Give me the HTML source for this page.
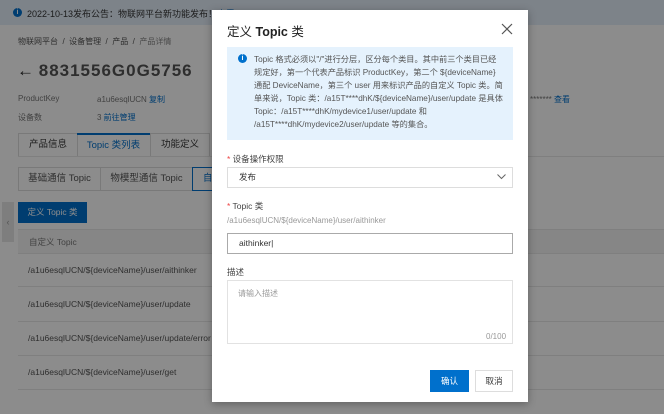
<!DOCTYPE html><html><head><meta charset="utf-8"><style>
*{margin:0;padding:0;box-sizing:border-box}
body{width:664px;height:414px;overflow:hidden;position:relative;background:#fff;font-family:"Liberation Sans","Noto Sans CJK SC",sans-serif;color:#333;font-size:9px}
.a{position:absolute;white-space:nowrap}
.ov{position:absolute;inset:0;background:rgba(0,0,0,0.45)}
.m{position:absolute;left:212px;top:10px;width:316px;height:392px;background:#fff;box-shadow:0 2px 8px rgba(0,0,0,.3)}
.blue{color:#0070cc}
.hl{position:absolute;left:18px;right:0;height:1px;background:#e8e8e8}
</style></head><body>
<div class="a" style="left:0;top:0;width:664px;height:25px;background:#e3eefa"></div>
<div class="a" style="left:13px;top:8px;width:9px;height:9px;border-radius:50%;background:#0070cc;color:#fff;font-size:7px;text-align:center;line-height:9px;font-weight:bold">i</div>
<div class="a" style="left:27px;top:7px;font-size:9px">2022-10-13发布公告：物联网平台新功能发布！<span class="blue">查看</span></div>
<div class="a" style="left:18px;top:36px;font-size:8px;color:#555">物联网平台 &nbsp;/ &nbsp;设备管理 &nbsp;/ &nbsp;产品 &nbsp;/ &nbsp;<span style="color:#888">产品详情</span></div>
<div class="a" style="left:17px;top:61px;font-size:17px;font-weight:bold;color:#222">← <span style="letter-spacing:1px;color:#555">8831556G0G5756</span></div>
<div class="a" style="left:18px;top:94px;font-size:8px;color:#777">ProductKey</div>
<div class="a" style="left:97px;top:94px;font-size:8px;color:#777">a1u6esqlUCN <span class="blue">复制</span></div>
<div class="a" style="left:18px;top:112px;font-size:8px;color:#777">设备数</div>
<div class="a" style="left:97px;top:112px;font-size:8px;color:#777">3 <span class="blue">前往管理</span></div>
<div class="a" style="left:530px;top:94px;font-size:8px;color:#777">******* <span class="blue">查看</span></div>
<div class="a" style="left:18px;top:133px;width:60px;height:24px;border:1px solid #ddd;font-size:9.5px;line-height:22px;text-align:center">产品信息</div>
<div class="a" style="left:77px;top:133px;width:73px;height:24px;border-top:2px solid #0070cc;font-size:9.5px;line-height:22px;text-align:center;color:#0070cc">Topic 类列表</div>
<div class="a" style="left:150px;top:133px;width:60px;height:24px;border:1px solid #ddd;font-size:9.5px;line-height:22px;text-align:center">功能定义</div>
<div class="hl" style="top:156px"></div>
<div class="a" style="left:18px;top:167px;width:83px;height:24px;border:1px solid #ddd;font-size:9.5px;line-height:22px;text-align:center;color:#555">基础通信 Topic</div>
<div class="a" style="left:100px;top:167px;width:93px;height:24px;border:1px solid #ddd;font-size:9.5px;line-height:22px;text-align:center;color:#555">物模型通信 Topic</div>
<div class="a" style="left:192px;top:167px;width:30px;height:24px;border:1px solid #0070cc;font-size:9.5px;line-height:22px;padding-left:10px;color:#0070cc">自</div>
<div class="a" style="left:2px;top:202px;width:12px;height:40px;background:#e6e6e6;color:#999;font-size:9px;line-height:40px;text-align:center">‹</div>
<div class="a" style="left:18px;top:202px;width:69px;height:21px;background:#0070cc;color:#fff;font-size:8.5px;line-height:21px;text-align:center">定义 Topic 类</div>
<div class="a" style="left:18px;top:229px;width:646px;height:24px;background:#f5f5f5;border-top:1px solid #e8e8e8"></div>
<div class="a" style="left:29px;top:236px;font-size:8.5px;color:#777">自定义 Topic</div>
<div class="hl" style="top:253px"></div>
<div class="a" style="left:28px;top:265px;font-size:8.5px;color:#555">/a1u6esqlUCN/${deviceName}/user/aithinker</div>
<div class="hl" style="top:286px"></div>
<div class="a" style="left:28px;top:299px;font-size:8.5px;color:#555">/a1u6esqlUCN/${deviceName}/user/update</div>
<div class="hl" style="top:321px"></div>
<div class="a" style="left:28px;top:333px;font-size:8.5px;color:#555">/a1u6esqlUCN/${deviceName}/user/update/error</div>
<div class="hl" style="top:355px"></div>
<div class="a" style="left:28px;top:367px;font-size:8.5px;color:#555">/a1u6esqlUCN/${deviceName}/user/get</div>
<div class="hl" style="top:389px"></div>
<div class="ov"></div>
<div class="m">
<div class="a" style="left:15px;top:11px;font-size:12.5px;color:#222">定义 <b>Topic</b> 类</div>
<svg class="a" style="left:289px;top:13px" width="12" height="12" viewBox="0 0 12 12"><path d="M1 1L11 11M11 1L1 11" stroke="#555" stroke-width="1.2"/></svg>
<div class="a" style="left:15px;top:37px;width:286px;height:93px;background:#e5f2fd"></div>
<div class="a" style="left:26px;top:44px;width:9px;height:9px;border-radius:50%;background:#0070cc;color:#fff;font-size:7px;text-align:center;line-height:9px;font-weight:bold">i</div>
<div class="a" style="left:42px;top:43px;font-size:8.2px;line-height:13px;color:#555;white-space:normal;width:250px">Topic 格式必须以"/"进行分层，区分每个类目。其中前三个类目已经规定好，第一个代表产品标识 ProductKey，第二个 ${deviceName} 通配 DeviceName，第三个 user 用来标识产品的自定义 Topic 类。简单来说，Topic 类：/a15T****dhK/${deviceName}/user/update 是具体 Topic：/a15T****dhK/mydevice1/user/update 和 /a15T****dhK/mydevice2/user/update 等的集合。</div>
<div class="a" style="left:15px;top:143px;font-size:8.5px;color:#444"><span style="color:#e44">*</span> 设备操作权限</div>
<div class="a" style="left:15px;top:157px;width:286px;height:21px;border:1px solid #ddd;font-size:8.5px;line-height:19px;padding-left:11px;color:#333">发布</div>
<svg class="a" style="left:285px;top:164px" width="9" height="6" viewBox="0 0 9 6"><path d="M0.5 0.5L4.5 4.5L8.5 0.5" stroke="#666" fill="none"/></svg>
<div class="a" style="left:15px;top:190px;font-size:8.5px;color:#444"><span style="color:#e44">*</span> Topic 类</div>
<div class="a" style="left:15px;top:206px;font-size:8px;color:#999">/a1u6esqlUCN/${deviceName}/user/aithinker</div>
<div class="a" style="left:15px;top:223px;width:286px;height:21px;border:1px solid #aaa;font-size:8.5px;line-height:19px;padding-left:11px;color:#333">aithinker|</div>
<div class="a" style="left:15px;top:256px;font-size:8.5px;color:#444">描述</div>
<div class="a" style="left:15px;top:270px;width:286px;height:64px;border:1px solid #e2e2e2"></div>
<div class="a" style="left:26px;top:278px;font-size:8px;color:#999">请输入描述</div>
<div class="a" style="left:274px;top:322px;font-size:8px;color:#999">0/100</div>
<div class="a" style="left:218px;top:360px;width:39px;height:22px;background:#0070cc;color:#fff;font-size:8.5px;line-height:22px;text-align:center">确认</div>
<div class="a" style="left:263px;top:360px;width:38px;height:22px;border:1px solid #ddd;font-size:8.5px;line-height:20px;text-align:center;color:#333">取消</div>
</div>
</body></html>
